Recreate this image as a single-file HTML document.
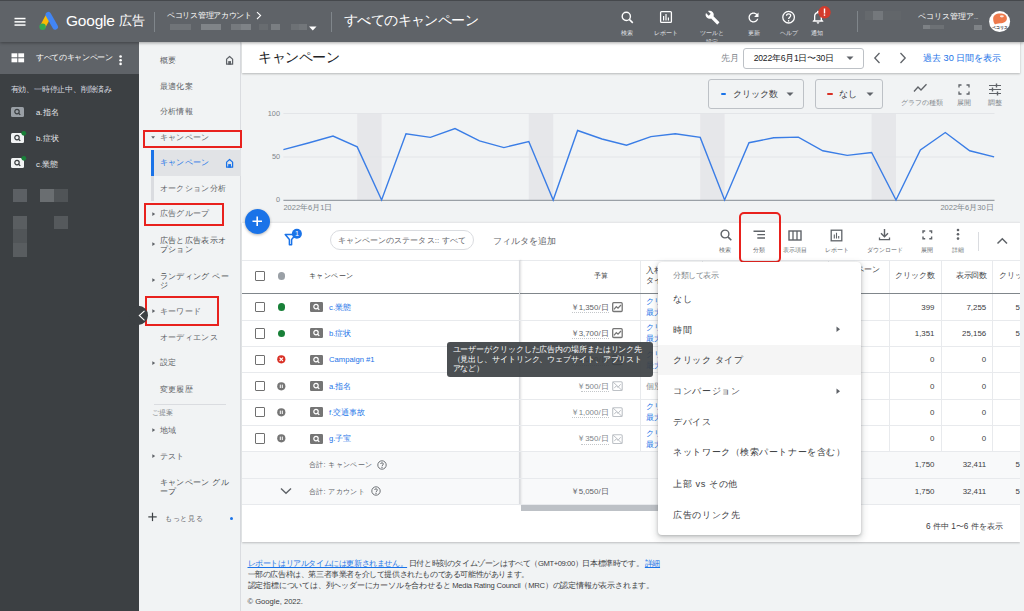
<!DOCTYPE html>
<html lang="ja">
<head>
<meta charset="utf-8">
<style>
*{margin:0;padding:0;box-sizing:border-box}
html,body{width:1024px;height:611px;overflow:hidden;background:#f1f3f4;font-family:"Liberation Sans",sans-serif;color:#3c4043}
.a{position:absolute;white-space:nowrap}
svg{position:absolute;overflow:visible}
/* header */
#hdr{position:absolute;left:0;top:0;width:1024px;height:42px;background:#5f6368;border-top:1px solid #45484c;box-shadow:0 1px 3px rgba(0,0,0,.35)}
/* sidebar */
#sb{position:absolute;left:0;top:42px;width:139px;height:569px;background:#3c4043}
#sbtop{position:absolute;left:0;top:42px;width:139px;height:32px;background:#5f6368}
#nav{position:absolute;left:139px;top:42px;width:102px;height:569px;background:#f1f3f4;border-right:1px solid #dadce0}
#title{position:absolute;left:242px;top:42px;width:778px;height:31px;background:#fff;box-shadow:0 1px 2px rgba(0,0,0,.25)}
#card{position:absolute;left:242px;top:222px;width:778px;height:320px;background:#fff;box-shadow:0 1px 2px rgba(60,64,67,.3)}
.w{color:#fff}
.nv{font-size:8.2px;color:#4a4e52;line-height:10px;letter-spacing:0.35px}
.red{position:absolute;border:2px solid #e8211d}
</style>
</head>
<body>
<div id="sb"></div>
<div id="sbtop"></div>
<div id="nav"></div>
<div id="title"></div>
<div id="card"></div>
<div id="hdr"></div>

<!-- HEADER CONTENT -->
<svg style="left:14px;top:17px" width="12" height="9"><rect x="0.5" y="0.8" width="11" height="1.5" fill="#fff"/><rect x="0.5" y="4.1" width="11" height="1.5" fill="#fff"/><rect x="0.5" y="7.3" width="11" height="1.5" fill="#fff"/></svg>
<svg style="left:36px;top:10px" width="24" height="22" viewBox="0 0 24 22">
<path d="M9.6 5.2 L14.6 8.2 L9.2 17.8 L4.2 15.4Z" fill="#fbbc04"/>
<line x1="12.4" y1="4.8" x2="19.2" y2="16.8" stroke="#4285f4" stroke-width="5.6" stroke-linecap="round"/>
<circle cx="6.6" cy="16.8" r="3.2" fill="#34a853"/>
</svg>
<div class="a w" style="left:66px;top:12px;font-size:15.5px;line-height:18px;letter-spacing:-0.2px">Google</div>
<div class="a w" style="left:119px;top:12px;font-size:13.4px;line-height:18px">広告</div>
<div class="a" style="left:154px;top:12px;width:1px;height:20px;background:#80868b"></div>
<div class="a w" style="left:167px;top:10px;font-size:7.6px;line-height:11px;letter-spacing:-0.3px">ペコリス管理アカウント</div>
<svg style="left:255px;top:11px" width="8" height="9"><path d="M2 1.2 L5.6 4.6 L2 8" fill="none" stroke="#fff" stroke-width="1.1"/></svg>
<div class="a" style="left:170px;top:23.5px;width:21px;height:6px;background:#75797d;opacity:.8;filter:blur(.6px)"></div>
<div class="a" style="left:200.5px;top:23.5px;width:20.5px;height:6px;background:#808488;filter:blur(.5px)"></div>
<div class="a" style="left:231px;top:23.5px;width:10px;height:6px;background:#767a7e;filter:blur(.5px)"></div>
<div class="a" style="left:241px;top:23.5px;width:9.5px;height:6px;background:#7f8387;filter:blur(.5px)"></div>
<div class="a" style="left:259px;top:23.5px;width:9px;height:6px;background:#686c70;filter:blur(.5px)"></div>
<div class="a" style="left:271px;top:23.5px;width:9px;height:6px;background:#7a7e82;filter:blur(.5px)"></div>
<div class="a" style="left:291px;top:23.5px;width:8px;height:6px;background:#6d7175;filter:blur(.5px)"></div>
<div class="a" style="left:299px;top:23.5px;width:8px;height:6px;background:#72767a;filter:blur(.5px)"></div>
<svg style="left:308px;top:26px" width="10" height="5"><path d="M1 0.5 L8.5 0.5 L4.75 4.5Z" fill="#fff"/></svg>
<div class="a" style="left:331px;top:12px;width:1px;height:20px;background:#80868b"></div>
<div class="a w" style="left:344px;top:12px;font-size:13.6px;line-height:18px;letter-spacing:-0.6px">すべてのキャンペーン</div>

<!-- header right icons -->
<svg style="left:619px;top:9px" width="16" height="16" viewBox="0 0 16 16"><circle cx="7.3" cy="7.4" r="4.1" fill="none" stroke="#fff" stroke-width="1.4"/><line x1="10.3" y1="10.4" x2="13.8" y2="13.9" stroke="#fff" stroke-width="1.5"/></svg>
<div class="a w" style="left:621px;top:28px;font-size:6.2px;line-height:9px;color:#e3e5e8">検索</div>
<svg style="left:659px;top:10px" width="14" height="14" viewBox="0 0 14 14"><rect x="1.6" y="1.6" width="10.8" height="10.8" rx="1" fill="none" stroke="#fff" stroke-width="1.3"/><rect x="4" y="6" width="1.2" height="4.5" fill="#fff"/><rect x="6.4" y="4" width="1.2" height="6.5" fill="#fff"/><rect x="8.8" y="7.5" width="1.2" height="3" fill="#fff"/></svg>
<div class="a w" style="left:653.5px;top:28px;font-size:6.1px;line-height:9px;color:#e3e5e8">レポート</div>
<svg style="left:705px;top:10px" width="15" height="15" viewBox="0 0 24 24"><path fill="#fff" d="M22.7 19l-9.1-9.1c.9-2.3.4-5-1.5-6.9-2-2-5-2.4-7.4-1.3L9 6 6 9 1.6 4.7C.4 7.1.9 10.1 2.9 12.1c1.9 1.9 4.6 2.4 6.9 1.5l9.1 9.1c.4.4 1 .4 1.4 0l2.3-2.3c.5-.4.5-1.1.1-1.4z"/></svg>
<div class="a w" style="left:700px;top:28px;font-size:6.15px;line-height:9px;color:#e3e5e8">ツールと</div>
<div class="a" style="left:700px;top:36px;width:30px;height:6px;overflow:hidden"><div class="a w" style="left:6px;top:1px;font-size:6.15px;line-height:9px;color:#e3e5e8">設定</div></div>
<svg style="left:746px;top:10px" width="15" height="15" viewBox="0 0 24 24"><path fill="#fff" d="M17.65 6.35C16.2 4.9 14.21 4 12 4c-4.42 0-7.99 3.58-7.99 8s3.57 8 7.99 8c3.73 0 6.84-2.55 7.73-6h-2.08c-.82 2.33-3.04 4-5.65 4-3.31 0-6-2.69-6-6s2.69-6 6-6c1.66 0 3.14.69 4.22 1.78L13 11h7V4l-2.35 2.35z"/></svg>
<div class="a w" style="left:747.5px;top:28px;font-size:6.1px;line-height:9px;color:#e3e5e8">更新</div>
<svg style="left:781px;top:10px" width="15" height="15" viewBox="0 0 15 15"><circle cx="7.6" cy="7.2" r="5.8" fill="none" stroke="#fff" stroke-width="1.3"/><path d="M5.5 5.7 C5.5 3.2 9.7 3.2 9.7 5.6 C9.7 7.1 7.6 7.2 7.6 9" fill="none" stroke="#fff" stroke-width="1.3"/><circle cx="7.6" cy="10.9" r="0.8" fill="#fff"/></svg>
<div class="a w" style="left:779.5px;top:28px;font-size:6.1px;line-height:9px;color:#e3e5e8">ヘルプ</div>
<svg style="left:810px;top:9px" width="16" height="16" viewBox="0 0 24 24"><path fill="#fff" d="M12 22c1.1 0 2-.9 2-2h-4c0 1.1.89 2 2 2zm6-6v-5c0-3.07-1.64-5.64-4.5-6.32V4c0-.83-.67-1.5-1.5-1.5s-1.5.67-1.5 1.5v.68C7.63 5.36 6 7.92 6 11v5l-2 2v1h16v-1l-2-2zm-2 1H8v-6c0-2.48 1.51-4.5 4-4.5s4 2.02 4 4.5v6z"/></svg>
<svg style="left:818px;top:6px" width="13" height="13" viewBox="0 0 13 13"><circle cx="6.5" cy="6.3" r="6.2" fill="#d33b2c"/><rect x="5.8" y="2.5" width="1.4" height="5" fill="#fff"/><rect x="5.8" y="8.4" width="1.4" height="1.4" fill="#fff"/></svg>
<div class="a w" style="left:811px;top:28px;font-size:6.2px;line-height:9px;color:#e3e5e8">通知</div>
<div class="a" style="left:857px;top:11px;width:1px;height:21px;background:#80868b"></div>
<div class="a" style="left:865px;top:11px;width:8px;height:9px;background:#65696d"></div>
<div class="a" style="left:873px;top:11px;width:10px;height:9px;background:#74787c"></div>
<div class="a" style="left:883px;top:11px;width:18px;height:9px;background:#62666a"></div>
<div class="a w" style="left:918px;top:11px;font-size:8.1px;line-height:11px">ペコリス管理ア<span style="font-size:5px">...</span></div>
<div class="a" style="left:923px;top:25px;width:7px;height:4px;background:#7d8185"></div>
<div class="a" style="left:930px;top:25px;width:14px;height:4px;background:#6d7175"></div>
<div class="a" style="left:974px;top:25px;width:8px;height:5px;background:#7f8387"></div>
<svg style="left:988px;top:10px" width="23" height="23" viewBox="0 0 23 23"><circle cx="11.6" cy="11.6" r="10.5" fill="#fff"/><path d="M5.2 9.5 C4.8 5.5 8 3.6 12 3.6 C16.5 3.6 18.9 5.6 18.9 8.4 C18.9 11.4 16 13 12 13.2 C9.5 13.3 8.2 13.8 7 14.4 C5.8 13 5.4 11.5 5.2 9.5Z" fill="#ee7a4c"/><ellipse cx="13.9" cy="6.3" rx="2" ry="1.1" fill="#fde6da"/><text x="3.6" y="19" font-size="4" letter-spacing="0.15" font-weight="bold" fill="#111" font-family="Liberation Sans">ペコリス</text></svg>

<!-- SIDEBAR -->
<svg style="left:11px;top:53px" width="14" height="10"><rect x="0.5" y="0.3" width="5.8" height="4" fill="#fff"/><rect x="7.3" y="0.3" width="5.8" height="4" fill="#fff"/><rect x="0.5" y="5.3" width="5.8" height="4" fill="#fff"/><rect x="7.3" y="5.3" width="5.8" height="4" fill="#fff"/></svg>
<div class="a w" style="left:36px;top:52px;font-size:7.6px;line-height:11px;letter-spacing:-0.35px">すべてのキャンペーン</div>
<svg style="left:118px;top:55px" width="5" height="12"><circle cx="2.6" cy="1.5" r="1.3" fill="#fff"/><circle cx="2.6" cy="5.2" r="1.3" fill="#fff"/><circle cx="2.6" cy="8.9" r="1.3" fill="#fff"/></svg>
<div class="a" style="left:10.5px;top:84px;font-size:7.8px;line-height:11px;letter-spacing:-0.2px;color:#dadce0">有効、一時停止中、削除済み</div>
<div class="a" style="left:11px;top:107px;width:13px;height:10px;background:#9aa0a6;border-radius:1.5px"></div>
<svg style="left:11px;top:107px" width="13" height="10"><circle cx="6" cy="4.6" r="2.2" fill="none" stroke="#3c4043" stroke-width="1.2"/><line x1="7.6" y1="6.2" x2="9.3" y2="7.9" stroke="#3c4043" stroke-width="1.3"/></svg>
<div class="a" style="left:36px;top:106.8px;font-size:7.8px;line-height:11px;color:#e8eaed">a.指名</div>
<div class="a" style="left:11px;top:133px;width:13px;height:10px;background:#f1f3f4;border-radius:1.5px"></div>
<svg style="left:11px;top:133px" width="13" height="10"><circle cx="6" cy="4.6" r="2.2" fill="none" stroke="#3c4043" stroke-width="1.2"/><line x1="7.6" y1="6.2" x2="9.3" y2="7.9" stroke="#3c4043" stroke-width="1.3"/><circle cx="12.8" cy="0.3" r="2.4" fill="#188038"/></svg>
<div class="a" style="left:36px;top:132.8px;font-size:7.8px;line-height:11px;color:#e8eaed">b.症状</div>
<div class="a" style="left:11px;top:158px;width:13px;height:10px;background:#f1f3f4;border-radius:1.5px"></div>
<svg style="left:11px;top:158px" width="13" height="10"><circle cx="6" cy="4.6" r="2.2" fill="none" stroke="#3c4043" stroke-width="1.2"/><line x1="7.6" y1="6.2" x2="9.3" y2="7.9" stroke="#3c4043" stroke-width="1.3"/><circle cx="12.8" cy="0.3" r="2.4" fill="#188038"/></svg>
<div class="a" style="left:36px;top:158.8px;font-size:7.8px;line-height:11px;color:#e8eaed">c.業態</div>
<div class="a" style="left:13px;top:189px;width:14px;height:13px;background:#5c6064"></div>
<div class="a" style="left:40px;top:189px;width:14px;height:13px;background:#6a6e71"></div>
<div class="a" style="left:54px;top:189px;width:13.5px;height:13px;background:#505457"></div>
<div class="a" style="left:13px;top:215.5px;width:14px;height:13.5px;background:#5a5e61"></div>
<div class="a" style="left:54px;top:215.5px;width:13.5px;height:13.5px;background:#55595c"></div>
<div class="a" style="left:13px;top:229px;width:14px;height:14px;background:#515558"></div>
<div class="a" style="left:13px;top:243px;width:14px;height:13.5px;background:#595d60"></div>

<!-- NAV -->
<div class="a nv" style="left:159.7px;top:56.1px;color:#5f6368">概要</div>
<svg style="left:225px;top:55px" width="10" height="11" viewBox="0 0 10 11"><path d="M1.6 9.2 V4.1 L4.6 1.5 L7.6 4.1 V9.2 Z" fill="none" stroke="#5f6368" stroke-width="1.25" stroke-linejoin="round"/><rect x="3.2" y="6.1" width="2.8" height="3.6" fill="#5f6368"/></svg>
<div class="a nv" style="left:159.7px;top:81.9px;color:#5f6368">最適化案</div>
<div class="a nv" style="left:159.7px;top:107.1px;color:#5f6368">分析情報</div>
<svg style="left:150.5px;top:135.5px" width="5" height="4"><path d="M0.2 0.3 L4 0.3 L2.1 2.8Z" fill="#5f6368"/></svg>
<div class="a nv" style="left:159.7px;top:132.6px;color:#5f6368">キャンペーン</div>
<div class="a" style="left:154px;top:150px;width:87px;height:25.5px;background:#e1e3e6"></div>
<div class="a" style="left:151px;top:150px;width:3px;height:25.5px;background:#1a73e8"></div>
<div class="a" style="left:151px;top:175.5px;width:3px;height:25px;background:#dadce0"></div>
<div class="a nv" style="left:159.7px;top:158.4px;color:#1a73e8">キャンペーン</div>
<svg style="left:225px;top:158px" width="10" height="11" viewBox="0 0 10 11"><path d="M1.6 9.2 V4.1 L4.6 1.5 L7.6 4.1 V9.2 Z" fill="none" stroke="#1a73e8" stroke-width="1.25" stroke-linejoin="round"/><rect x="3.2" y="6.1" width="2.8" height="3.6" fill="#1a73e8"/></svg>
<div class="a nv" style="left:159.7px;top:183.6px;color:#5f6368">オークション分析</div>
<svg style="left:151.5px;top:211.6px" width="4" height="5"><path d="M0.3 0.3 L3.2 2.1 L0.3 3.9Z" fill="#5f6368"/></svg>
<div class="a nv" style="left:159.7px;top:209.2px;color:#5f6368">広告グループ</div>
<svg style="left:151.5px;top:242.4px" width="4" height="5"><path d="M0.3 0.3 L3.2 2.1 L0.3 3.9Z" fill="#5f6368"/></svg>
<div class="a nv" style="left:159.7px;top:235.6px;line-height:9.5px;white-space:normal;width:80px">広告と広告表示オ<br>プション</div>
<svg style="left:151.5px;top:278.4px" width="4" height="5"><path d="M0.3 0.3 L3.2 2.1 L0.3 3.9Z" fill="#5f6368"/></svg>
<div class="a nv" style="left:159.7px;top:271.6px;line-height:9.2px;white-space:normal;width:80px">ランディング ペー<br>ジ</div>
<svg style="left:151.5px;top:309px" width="4" height="5"><path d="M0.3 0.3 L3.2 2.1 L0.3 3.9Z" fill="#5f6368"/></svg>
<div class="a nv" style="left:159.7px;top:306.6px;color:#5f6368">キーワード</div>
<div class="a nv" style="left:159.7px;top:332.8px;color:#5f6368">オーディエンス</div>
<svg style="left:151.5px;top:360.8px" width="4" height="5"><path d="M0.3 0.3 L3.2 2.1 L0.3 3.9Z" fill="#5f6368"/></svg>
<div class="a nv" style="left:159.7px;top:358.4px;color:#5f6368">設定</div>
<div class="a nv" style="left:159.7px;top:384.5px;color:#5f6368">変更履歴</div>
<div class="a" style="left:154px;top:404px;width:72px;height:1px;background:#dadce0"></div>
<div class="a" style="left:152px;top:408px;font-size:7.2px;line-height:9px;color:#80868b">ご提案</div>
<svg style="left:151.5px;top:428px" width="4" height="5"><path d="M0.3 0.3 L3.2 2.1 L0.3 3.9Z" fill="#5f6368"/></svg>
<div class="a nv" style="left:159.7px;top:425.6px;color:#5f6368">地域</div>
<svg style="left:151.5px;top:454px" width="4" height="5"><path d="M0.3 0.3 L3.2 2.1 L0.3 3.9Z" fill="#5f6368"/></svg>
<div class="a nv" style="left:159.7px;top:451.6px;color:#5f6368">テスト</div>
<div class="a nv" style="left:159.7px;top:477.6px;line-height:9.4px;white-space:normal;width:80px">キャンペーン グル<br>ープ</div>
<svg style="left:147.5px;top:512px" width="10" height="10"><rect x="0.3" y="4.3" width="8.4" height="1.2" fill="#3c4043"/><rect x="3.9" y="0.7" width="1.2" height="8.4" fill="#3c4043"/></svg>
<div class="a" style="left:164.7px;top:513.5px;font-size:7.4px;line-height:10px;letter-spacing:0.9px;color:#5f6368">もっと見る</div>
<div class="a" style="left:230.3px;top:517px;width:3px;height:3px;border-radius:50%;background:#1a73e8"></div>
<div class="red" style="left:143px;top:130px;width:98.5px;height:17.5px"></div>
<div class="red" style="left:143.5px;top:203px;width:80px;height:22.5px"></div>
<div class="red" style="left:145px;top:295.5px;width:73.5px;height:30.5px"></div>
<svg style="left:128px;top:305px" width="21" height="21"><circle cx="10.4" cy="10.3" r="9.6" fill="#3c4043"/><path d="M16.5 5.8 L11.3 10.5 L16.5 15.3" fill="none" stroke="#fff" stroke-width="1.1"/></svg>

<!-- TITLE/CHART -->
<div class="a" style="left:258px;top:48px;font-size:14px;line-height:18px;letter-spacing:-0.4px;color:#202124">キャンペーン</div>
<div class="a" style="left:720.5px;top:52.5px;font-size:9px;line-height:11px;color:#80868b">先月</div>
<div class="a" style="left:742.7px;top:48px;width:121.3px;height:20.5px;border:1px solid #bdc1c6;border-radius:3px;background:#fff"></div>
<div class="a" style="left:753.8px;top:52.5px;font-size:8.6px;line-height:11px;letter-spacing:-0.25px;color:#202124">2022年6月1日〜30日</div>
<svg style="left:846px;top:56px" width="9" height="5"><path d="M0.5 0.5 L7.5 0.5 L4 4Z" fill="#5f6368"/></svg>
<svg style="left:873px;top:52px" width="8" height="12"><path d="M6.5 1 L1.8 6 L6.5 11" fill="none" stroke="#5f6368" stroke-width="1.3"/></svg>
<svg style="left:898.5px;top:52px" width="8" height="12"><path d="M1.5 1 L6.2 6 L1.5 11" fill="none" stroke="#5f6368" stroke-width="1.3"/></svg>
<div class="a" style="left:923px;top:52px;font-size:9.2px;line-height:12px;color:#1a73e8">過去 30 日間を表示</div>
<div class="a" style="left:708px;top:78.6px;width:95.8px;height:30.4px;border:1px solid #bdc1c6;border-radius:3px"></div>
<div class="a" style="left:720.6px;top:93px;width:5.4px;height:2px;background:#1a73e8;border-radius:1px"></div>
<div class="a" style="left:732.6px;top:88px;font-size:9px;line-height:12px;color:#3c4043">クリック数</div>
<svg style="left:786px;top:92px" width="9" height="5"><path d="M0.5 0.5 L7.5 0.5 L4 4Z" fill="#5f6368"/></svg>
<div class="a" style="left:814.6px;top:78.6px;width:68px;height:30.4px;border:1px solid #bdc1c6;border-radius:3px"></div>
<div class="a" style="left:826.6px;top:93px;width:6px;height:2px;background:#d93025;border-radius:1px"></div>
<div class="a" style="left:839.2px;top:88px;font-size:9px;line-height:12px;color:#3c4043">なし</div>
<svg style="left:866px;top:92px" width="9" height="5"><path d="M0.5 0.5 L7.5 0.5 L4 4Z" fill="#5f6368"/></svg>
<svg style="left:913px;top:83px" width="15" height="10" viewBox="0 0 15 10"><path d="M1 8.5 L5 4 L8 7 L13.5 1.2" fill="none" stroke="#5f6368" stroke-width="1.3"/></svg>
<div class="a" style="left:900.8px;top:98px;font-size:6.6px;line-height:9px;color:#80868b">グラフの種類</div>
<svg style="left:957.5px;top:83.5px" width="12" height="11" viewBox="0 0 12 11"><path d="M1 3.5 V1 H3.5 M8.5 1 H11 V3.5 M11 7.5 V10 H8.5 M3.5 10 H1 V7.5" fill="none" stroke="#5f6368" stroke-width="1.3"/></svg>
<div class="a" style="left:956.8px;top:98px;font-size:6.6px;line-height:9px;color:#80868b">展開</div>
<svg style="left:987.5px;top:82.5px" width="14" height="13" viewBox="0 0 14 13"><path d="M1 2.5 H13 M1 6.5 H13 M1 10.5 H13" stroke="#5f6368" stroke-width="1.2"/><path d="M8.5 0.5 V4.5 M4.5 4.5 V8.5 M9.5 8.5 V12.5" stroke="#5f6368" stroke-width="1.4"/></svg>
<div class="a" style="left:987.6px;top:98px;font-size:6.6px;line-height:9px;color:#80868b">調整</div>
<svg style="left:0;top:0" width="1024" height="611"><rect x="357.2" y="113.5" width="24.4" height="86.5" fill="#e6e7ea"/><rect x="528.8" y="113.5" width="24.4" height="86.5" fill="#e6e7ea"/><rect x="700.2" y="113.5" width="24.4" height="86.5" fill="#e6e7ea"/><rect x="871.6" y="113.5" width="24.4" height="86.5" fill="#e6e7ea"/><line x1="283.4" y1="113.5" x2="994.5" y2="113.5" stroke="#e3e5e8" stroke-width="1"/><line x1="283.4" y1="157" x2="994.5" y2="157" stroke="#e3e5e8" stroke-width="1"/><line x1="283.4" y1="200.3" x2="994.5" y2="200.3" stroke="#9aa0a6" stroke-width="1.2"/><polyline points="283.4,149.6 308.3,143.0 333.0,136.1 357.2,146.9 381.6,200.0 406.0,133.7 430.4,137.4 455.0,128.6 479.5,140.8 503.9,147.6 528.8,141.5 553.2,200.0 577.6,130.5 602.0,139.0 626.5,145.2 650.9,136.6 675.3,133.7 700.2,137.4 724.6,200.0 749.0,142.7 773.7,137.8 798.3,137.1 822.8,150.8 847.2,155.4 871.6,152.5 896.0,200.0 920.4,150.0 945.3,132.5 969.7,150.8 994.1,156.9" fill="none" stroke="#3a7de6" stroke-width="1.4" stroke-linejoin="miter"/></svg>
<div class="a" style="left:263px;top:108.5px;width:17px;text-align:right;font-size:7.3px;line-height:10px;color:#80868b">100</div>
<div class="a" style="left:263px;top:152px;width:17px;text-align:right;font-size:7.3px;line-height:10px;color:#80868b">50</div>
<div class="a" style="left:263px;top:195px;width:17px;text-align:right;font-size:7.3px;line-height:10px;color:#80868b">0</div>
<div class="a" style="left:283.4px;top:203px;font-size:7.5px;line-height:10px;color:#80868b">2022年6月1日</div>
<div class="a" style="left:893.6px;top:203px;width:100px;text-align:right;font-size:7.5px;line-height:10px;color:#80868b">2022年6月30日</div>

<!-- TABLE -->
<svg style="left:283.5px;top:233px" width="14" height="13" viewBox="0 0 14 13"><path d="M1.2 1.6 H11.8 L7.6 6.6 V11.8 H5.4 V6.6 Z" fill="none" stroke="#1a73e8" stroke-width="1.5" stroke-linejoin="round"/></svg>
<svg style="left:291px;top:228px" width="12" height="12"><circle cx="5.9" cy="5.8" r="5" fill="#1a73e8"/><text x="5.9" y="8.4" font-size="7.2" text-anchor="middle" fill="#fff" font-family="Liberation Sans">1</text></svg>
<div class="a" style="left:329.7px;top:230px;width:144.7px;height:20.3px;border:1px solid #dadce0;border-radius:10px"></div>
<div class="a" style="left:337.5px;top:235px;font-size:8.07px;line-height:11px;letter-spacing:0.1px;color:#5f6368">キャンペーンのステータス:: すべて</div>
<div class="a" style="left:493px;top:235px;font-size:8.8px;line-height:12px;color:#5f6368">フィルタを追加</div>
<svg style="left:718.5px;top:228px" width="14" height="14" viewBox="0 0 14 14"><circle cx="6" cy="6" r="3.9" fill="none" stroke="#5f6368" stroke-width="1.4"/><line x1="8.9" y1="8.9" x2="12.3" y2="12.3" stroke="#5f6368" stroke-width="1.6"/></svg>
<div class="a" style="left:710.3px;top:244.5px;width:30px;text-align:center;font-size:6.35px;line-height:9px;color:#6b6f73">検索</div>
<svg style="left:752px;top:229px" width="14" height="12" viewBox="0 0 14 12"><path d="M1.5 2.2 H13 M5.3 5.6 H13 M5.3 9 H13" stroke="#5f6368" stroke-width="1.4"/></svg>
<div class="a" style="left:744.2px;top:244.5px;width:30px;text-align:center;font-size:6.35px;line-height:9px;color:#6b6f73">分類</div>
<svg style="left:788px;top:229.5px" width="14" height="11" viewBox="0 0 14 11"><rect x="1" y="1" width="12" height="9" fill="none" stroke="#5f6368" stroke-width="1.4"/><path d="M5 1 V10 M9 1 V10" stroke="#5f6368" stroke-width="1.3"/></svg>
<div class="a" style="left:780.0px;top:244.5px;width:30px;text-align:center;font-size:6.35px;line-height:9px;color:#6b6f73">表示項目</div>
<svg style="left:830px;top:228.5px" width="13" height="13" viewBox="0 0 13 13"><rect x="1.2" y="1.2" width="10.6" height="10.6" fill="none" stroke="#5f6368" stroke-width="1.3"/><path d="M4.3 5.5 V9.5 M6.5 3.8 V9.5 M8.7 7 V9.5" stroke="#5f6368" stroke-width="1.1"/></svg>
<div class="a" style="left:821.7px;top:244.5px;width:30px;text-align:center;font-size:6.35px;line-height:9px;color:#6b6f73">レポート</div>
<svg style="left:878px;top:228px" width="13" height="13" viewBox="0 0 13 13"><path d="M6.5 1 V8.5 M3 5.2 L6.5 8.7 L10 5.2" fill="none" stroke="#5f6368" stroke-width="1.4"/><path d="M1.5 9.5 V11.7 H11.5 V9.5" fill="none" stroke="#5f6368" stroke-width="1.3"/></svg>
<div class="a" style="left:864.5px;top:244.5px;width:40px;text-align:center;font-size:6.35px;line-height:9px;color:#6b6f73">ダウンロード</div>
<svg style="left:922px;top:230px" width="11" height="10" viewBox="0 0 11 10"><path d="M1 3.2 V1 H3.2 M7.3 1 H9.6 V3.2 M9.6 6.4 V8.7 H7.3 M3.2 8.7 H1 V6.4" fill="none" stroke="#5f6368" stroke-width="1.4"/></svg>
<div class="a" style="left:911.9px;top:244.5px;width:30px;text-align:center;font-size:6.35px;line-height:9px;color:#6b6f73">展開</div>
<svg style="left:955px;top:228px" width="6" height="14"><circle cx="3" cy="2" r="1.3" fill="#5f6368"/><circle cx="3" cy="6.3" r="1.3" fill="#5f6368"/><circle cx="3" cy="10.6" r="1.3" fill="#5f6368"/></svg>
<div class="a" style="left:943.0px;top:244.5px;width:30px;text-align:center;font-size:6.35px;line-height:9px;color:#6b6f73">詳細</div>
<div class="a" style="left:978px;top:232px;width:1px;height:19px;background:#dadce0"></div>
<svg style="left:996px;top:236.5px" width="13" height="8"><path d="M1.5 6.5 L6.3 1.8 L11 6.5" fill="none" stroke="#5f6368" stroke-width="1.5"/></svg>
<div class="a" style="left:242px;top:259.5px;width:778px;height:1px;background:#e8eaed"></div>
<div class="a" style="left:242px;top:222px;width:778px;height:1px;background:#e6e7e9"></div>
<div class="a" style="left:242px;top:292.8px;width:778px;height:1.6px;background:#80868b"></div>
<div class="a" style="left:640px;top:260px;width:1px;height:33px;background:#e8eaed"></div>
<div class="a" style="left:701.8px;top:260px;width:1px;height:33px;background:#e8eaed"></div>
<div class="a" style="left:827.9px;top:260px;width:1px;height:33px;background:#e8eaed"></div>
<div class="a" style="left:888.7px;top:260px;width:1px;height:33px;background:#e8eaed"></div>
<div class="a" style="left:940.5px;top:260px;width:1px;height:33px;background:#e8eaed"></div>
<div class="a" style="left:991.5px;top:260px;width:1px;height:33px;background:#e8eaed"></div>
<div class="a" style="left:640px;top:294px;width:1px;height:210.5px;background:#e8eaed"></div>
<div class="a" style="left:888.7px;top:294px;width:1px;height:210.5px;background:#e8eaed"></div>
<div class="a" style="left:940.5px;top:294px;width:1px;height:210.5px;background:#e8eaed"></div>
<div class="a" style="left:991.5px;top:294px;width:1px;height:210.5px;background:#e8eaed"></div>
<div class="a" style="left:242px;top:451.3px;width:778px;height:53px;background:#f8f9fa"></div>
<div class="a" style="left:519px;top:260px;width:1px;height:244.5px;background:#dadce0;box-shadow:1px 0 2px rgba(60,64,67,.25)"></div>
<div class="a" style="left:242px;top:319.8px;width:778px;height:1px;background:#e8eaed"></div>
<div class="a" style="left:242px;top:346.1px;width:778px;height:1px;background:#e8eaed"></div>
<div class="a" style="left:242px;top:372.4px;width:778px;height:1px;background:#e8eaed"></div>
<div class="a" style="left:242px;top:398.7px;width:778px;height:1px;background:#e8eaed"></div>
<div class="a" style="left:242px;top:424.9px;width:778px;height:1px;background:#e8eaed"></div>
<div class="a" style="left:242px;top:451.2px;width:778px;height:1px;background:#e8eaed"></div>
<div class="a" style="left:242px;top:477.5px;width:778px;height:1px;background:#e8eaed"></div>
<div class="a" style="left:242px;top:503.8px;width:778px;height:1px;background:#e8eaed"></div>
<div class="a" style="left:254.8px;top:271px;width:10.4px;height:10.4px;border:1.4px solid #707070;border-radius:1px"></div>
<div class="a" style="left:277.7px;top:272.3px;width:7.8px;height:7.8px;border-radius:50%;background:#9aa0a6"></div>
<div class="a" style="left:308.75px;top:271px;font-size:7.3px;line-height:10px;letter-spacing:0.5px;color:#3c4043">キャンペーン</div>
<div class="a" style="left:594.3px;top:271px;font-size:7.2px;line-height:10px;color:#3c4043">予算</div>
<div class="a" style="left:645.7px;top:266px;font-size:7.6px;line-height:10.4px;color:#3c4043">入札戦略<br>タイプ</div>
<div class="a" style="left:832px;top:265px;font-size:7.6px;line-height:10.4px;color:#3c4043">キャンペーン</div>
<div class="a" style="left:890px;top:271px;width:44.8px;text-align:right;font-size:7.8px;line-height:10px;color:#3c4043">クリック数</div>
<div class="a" style="left:942px;top:271px;width:44.4px;text-align:right;font-size:7.8px;line-height:10px;letter-spacing:-0.4px;color:#3c4043">表示回数</div>
<div class="a" style="left:999px;top:271px;font-size:7.8px;line-height:10px;color:#3c4043">クリック率</div>
<div class="a" style="left:254.8px;top:301.9px;width:10.4px;height:10.4px;border:1.4px solid #707070;border-radius:1px"></div>
<div class="a" style="left:277.7px;top:303.2px;width:7.8px;height:7.8px;border-radius:50%;background:#188038"></div>
<svg style="left:310px;top:302.1px" width="13" height="10"><rect x="0" y="0" width="13" height="10" rx="1.2" fill="#757575"/><circle cx="6" cy="4.6" r="2.2" fill="none" stroke="#fff" stroke-width="1.2"/><line x1="7.6" y1="6.2" x2="9.3" y2="7.9" stroke="#fff" stroke-width="1.3"/></svg>
<div class="a" style="left:329.1px;top:301.6px;font-size:7.65px;line-height:11px;color:#1a73e8">c.業態</div>
<div class="a" style="left:548px;top:301.6px;width:60.6px;text-align:right;font-size:7.9px;line-height:11px;color:#5f6368">￥1,350/日</div>
<div class="a" style="left:571.8px;top:312.1px;width:36.8px;border-top:1px dotted #c4c7ca"></div>
<svg style="left:611.5px;top:302.1px" width="11" height="10"><rect x="0.7" y="0.7" width="9.5" height="8.8" rx="1" fill="none" stroke="#757575" stroke-width="1.3"/><path d="M2 7.3 L4.3 4.6 L6 6.2 L9 3" fill="none" stroke="#757575" stroke-width="1.3"/></svg>
<div class="a" style="left:645.7px;top:296.1px;font-size:7.6px;line-height:11px;color:#1a73e8">クリ<br>最大</div>
<div class="a" style="left:880px;top:301.6px;width:54.5px;text-align:right;font-size:7.9px;line-height:11px;color:#3c4043">399</div>
<div class="a" style="left:930px;top:301.6px;width:56.2px;text-align:right;font-size:7.9px;line-height:11px;color:#3c4043">7,255</div>
<div class="a" style="left:1015.5px;top:301.6px;font-size:7.9px;line-height:11px;color:#3c4043">5</div>
<div class="a" style="left:254.8px;top:328.2px;width:10.4px;height:10.4px;border:1.4px solid #707070;border-radius:1px"></div>
<div class="a" style="left:277.7px;top:329.5px;width:7.8px;height:7.8px;border-radius:50%;background:#188038"></div>
<svg style="left:310px;top:328.4px" width="13" height="10"><rect x="0" y="0" width="13" height="10" rx="1.2" fill="#757575"/><circle cx="6" cy="4.6" r="2.2" fill="none" stroke="#fff" stroke-width="1.2"/><line x1="7.6" y1="6.2" x2="9.3" y2="7.9" stroke="#fff" stroke-width="1.3"/></svg>
<div class="a" style="left:329.1px;top:327.9px;font-size:7.65px;line-height:11px;color:#1a73e8">b.症状</div>
<div class="a" style="left:548px;top:327.9px;width:60.6px;text-align:right;font-size:7.9px;line-height:11px;color:#5f6368">￥3,700/日</div>
<div class="a" style="left:571.8px;top:338.4px;width:36.8px;border-top:1px dotted #c4c7ca"></div>
<svg style="left:611.5px;top:328.4px" width="11" height="10"><rect x="0.7" y="0.7" width="9.5" height="8.8" rx="1" fill="none" stroke="#757575" stroke-width="1.3"/><path d="M2 7.3 L4.3 4.6 L6 6.2 L9 3" fill="none" stroke="#757575" stroke-width="1.3"/></svg>
<div class="a" style="left:645.7px;top:322.4px;font-size:7.6px;line-height:11px;color:#1a73e8">クリ<br>最大</div>
<div class="a" style="left:880px;top:327.9px;width:54.5px;text-align:right;font-size:7.9px;line-height:11px;color:#3c4043">1,351</div>
<div class="a" style="left:930px;top:327.9px;width:56.2px;text-align:right;font-size:7.9px;line-height:11px;color:#3c4043">25,156</div>
<div class="a" style="left:1015.5px;top:327.9px;font-size:7.9px;line-height:11px;color:#3c4043">5</div>
<div class="a" style="left:254.8px;top:354.5px;width:10.4px;height:10.4px;border:1.4px solid #707070;border-radius:1px"></div>
<svg style="left:277.3px;top:355.4px" width="9" height="9"><circle cx="4.3" cy="4.3" r="4.1" fill="#d93025"/><path d="M2.6 2.6 L6 6 M6 2.6 L2.6 6" stroke="#fff" stroke-width="1.1"/></svg>
<svg style="left:310px;top:354.7px" width="13" height="10"><rect x="0" y="0" width="13" height="10" rx="1.2" fill="#757575"/><circle cx="6" cy="4.6" r="2.2" fill="none" stroke="#fff" stroke-width="1.2"/><line x1="7.6" y1="6.2" x2="9.3" y2="7.9" stroke="#fff" stroke-width="1.3"/></svg>
<div class="a" style="left:329.1px;top:354.2px;font-size:7.65px;line-height:11px;color:#1a73e8">Campaign #1</div>
<div class="a" style="left:548px;top:354.2px;width:60.6px;text-align:right;font-size:7.9px;line-height:11px;color:#5f6368">￥1,000/日</div>
<div class="a" style="left:571.8px;top:364.7px;width:36.8px;border-top:1px dotted #c4c7ca"></div>
<svg style="left:611.5px;top:354.7px" width="11" height="10"><rect x="0.7" y="0.7" width="9.5" height="8.8" rx="1" fill="none" stroke="#757575" stroke-width="1.3"/><path d="M2 7.3 L4.3 4.6 L6 6.2 L9 3" fill="none" stroke="#757575" stroke-width="1.3"/></svg>
<div class="a" style="left:645.7px;top:348.7px;font-size:7.6px;line-height:11px;color:#1a73e8">クリ<br>最大</div>
<div class="a" style="left:880px;top:354.2px;width:54.5px;text-align:right;font-size:7.9px;line-height:11px;color:#3c4043">0</div>
<div class="a" style="left:930px;top:354.2px;width:56.2px;text-align:right;font-size:7.9px;line-height:11px;color:#3c4043">0</div>
<div class="a" style="left:254.8px;top:380.8px;width:10.4px;height:10.4px;border:1.4px solid #707070;border-radius:1px"></div>
<svg style="left:277.3px;top:381.7px" width="9" height="9"><circle cx="4.3" cy="4.3" r="4.1" fill="#757575"/><path d="M3.3 2.6 V6 M5.3 2.6 V6" stroke="#fff" stroke-width="1"/></svg>
<svg style="left:310px;top:381.0px" width="13" height="10"><rect x="0" y="0" width="13" height="10" rx="1.2" fill="#757575"/><circle cx="6" cy="4.6" r="2.2" fill="none" stroke="#fff" stroke-width="1.2"/><line x1="7.6" y1="6.2" x2="9.3" y2="7.9" stroke="#fff" stroke-width="1.3"/></svg>
<div class="a" style="left:329.1px;top:380.5px;font-size:7.65px;line-height:11px;color:#1a73e8">a.指名</div>
<div class="a" style="left:548px;top:380.5px;width:60.6px;text-align:right;font-size:7.9px;line-height:11px;color:#80868b">￥500/日</div>
<div class="a" style="left:581.0px;top:391.0px;width:27.6px;border-top:1px dotted #c4c7ca"></div>
<svg style="left:611.5px;top:381.0px" width="11" height="10"><rect x="0.7" y="0.7" width="9.5" height="8.8" rx="1" fill="none" stroke="#bdc1c6" stroke-width="1.1"/><path d="M2.2 7.2 L4.3 4.8 L6 6.3 L8.7 3.2 M0.8 0.8 L10 9.4" fill="none" stroke="#bdc1c6" stroke-width="1"/></svg>
<div class="a" style="left:645.7px;top:380.5px;font-size:7.6px;line-height:11px;color:#80868b">個別</div>
<div class="a" style="left:880px;top:380.5px;width:54.5px;text-align:right;font-size:7.9px;line-height:11px;color:#3c4043">0</div>
<div class="a" style="left:930px;top:380.5px;width:56.2px;text-align:right;font-size:7.9px;line-height:11px;color:#3c4043">0</div>
<div class="a" style="left:254.8px;top:407.1px;width:10.4px;height:10.4px;border:1.4px solid #707070;border-radius:1px"></div>
<svg style="left:277.3px;top:408.0px" width="9" height="9"><circle cx="4.3" cy="4.3" r="4.1" fill="#757575"/><path d="M3.3 2.6 V6 M5.3 2.6 V6" stroke="#fff" stroke-width="1"/></svg>
<svg style="left:310px;top:407.3px" width="13" height="10"><rect x="0" y="0" width="13" height="10" rx="1.2" fill="#757575"/><circle cx="6" cy="4.6" r="2.2" fill="none" stroke="#fff" stroke-width="1.2"/><line x1="7.6" y1="6.2" x2="9.3" y2="7.9" stroke="#fff" stroke-width="1.3"/></svg>
<div class="a" style="left:329.1px;top:406.8px;font-size:7.65px;line-height:11px;color:#1a73e8">f.交通事故</div>
<div class="a" style="left:548px;top:406.8px;width:60.6px;text-align:right;font-size:7.9px;line-height:11px;color:#80868b">￥1,000/日</div>
<div class="a" style="left:571.8px;top:417.3px;width:36.8px;border-top:1px dotted #c4c7ca"></div>
<svg style="left:611.5px;top:407.3px" width="11" height="10"><rect x="0.7" y="0.7" width="9.5" height="8.8" rx="1" fill="none" stroke="#bdc1c6" stroke-width="1.1"/><path d="M2.2 7.2 L4.3 4.8 L6 6.3 L8.7 3.2 M0.8 0.8 L10 9.4" fill="none" stroke="#bdc1c6" stroke-width="1"/></svg>
<div class="a" style="left:645.7px;top:401.3px;font-size:7.6px;line-height:11px;color:#1a73e8">クリ<br>最大</div>
<div class="a" style="left:880px;top:406.8px;width:54.5px;text-align:right;font-size:7.9px;line-height:11px;color:#3c4043">0</div>
<div class="a" style="left:930px;top:406.8px;width:56.2px;text-align:right;font-size:7.9px;line-height:11px;color:#3c4043">0</div>
<div class="a" style="left:254.8px;top:433.4px;width:10.4px;height:10.4px;border:1.4px solid #707070;border-radius:1px"></div>
<svg style="left:277.3px;top:434.2px" width="9" height="9"><circle cx="4.3" cy="4.3" r="4.1" fill="#757575"/><path d="M3.3 2.6 V6 M5.3 2.6 V6" stroke="#fff" stroke-width="1"/></svg>
<svg style="left:310px;top:433.6px" width="13" height="10"><rect x="0" y="0" width="13" height="10" rx="1.2" fill="#757575"/><circle cx="6" cy="4.6" r="2.2" fill="none" stroke="#fff" stroke-width="1.2"/><line x1="7.6" y1="6.2" x2="9.3" y2="7.9" stroke="#fff" stroke-width="1.3"/></svg>
<div class="a" style="left:329.1px;top:433.1px;font-size:7.65px;line-height:11px;color:#1a73e8">g.子宝</div>
<div class="a" style="left:548px;top:433.1px;width:60.6px;text-align:right;font-size:7.9px;line-height:11px;color:#80868b">￥350/日</div>
<div class="a" style="left:581.0px;top:443.6px;width:27.6px;border-top:1px dotted #c4c7ca"></div>
<svg style="left:611.5px;top:433.6px" width="11" height="10"><rect x="0.7" y="0.7" width="9.5" height="8.8" rx="1" fill="none" stroke="#bdc1c6" stroke-width="1.1"/><path d="M2.2 7.2 L4.3 4.8 L6 6.3 L8.7 3.2 M0.8 0.8 L10 9.4" fill="none" stroke="#bdc1c6" stroke-width="1"/></svg>
<div class="a" style="left:645.7px;top:427.6px;font-size:7.6px;line-height:11px;color:#1a73e8">クリ<br>最大</div>
<div class="a" style="left:880px;top:433.1px;width:54.5px;text-align:right;font-size:7.9px;line-height:11px;color:#3c4043">0</div>
<div class="a" style="left:930px;top:433.1px;width:56.2px;text-align:right;font-size:7.9px;line-height:11px;color:#3c4043">0</div>
<div class="a" style="left:308.8px;top:459.3px;font-size:7.3px;line-height:11px;letter-spacing:0.35px;color:#5f6368">合計: キャンペーン</div>
<svg style="left:377.2px;top:459.8px" width="10" height="10"><circle cx="5" cy="5" r="4.2" fill="none" stroke="#5f6368" stroke-width="0.9"/><path d="M3.6 4 C3.6 2.4 6.4 2.4 6.4 4 C6.4 5 5 5 5 6.2" fill="none" stroke="#5f6368" stroke-width="0.9"/><circle cx="5" cy="7.4" r="0.55" fill="#5f6368"/></svg>
<div class="a" style="left:880px;top:459.3px;width:54.5px;text-align:right;font-size:7.9px;line-height:11px;color:#3c4043">1,750</div>
<div class="a" style="left:930px;top:459.3px;width:56.2px;text-align:right;font-size:7.9px;line-height:11px;color:#3c4043">32,411</div>
<div class="a" style="left:1015.5px;top:459.3px;font-size:7.9px;line-height:11px;color:#3c4043">5</div>
<div class="a" style="left:308.8px;top:485.6px;font-size:7.3px;line-height:11px;letter-spacing:0.35px;color:#5f6368">合計: アカウント</div>
<svg style="left:371.1px;top:486.1px" width="10" height="10"><circle cx="5" cy="5" r="4.2" fill="none" stroke="#5f6368" stroke-width="0.9"/><path d="M3.6 4 C3.6 2.4 6.4 2.4 6.4 4 C6.4 5 5 5 5 6.2" fill="none" stroke="#5f6368" stroke-width="0.9"/><circle cx="5" cy="7.4" r="0.55" fill="#5f6368"/></svg>
<div class="a" style="left:880px;top:485.6px;width:54.5px;text-align:right;font-size:7.9px;line-height:11px;color:#3c4043">1,750</div>
<div class="a" style="left:930px;top:485.6px;width:56.2px;text-align:right;font-size:7.9px;line-height:11px;color:#3c4043">32,411</div>
<div class="a" style="left:1015.5px;top:485.6px;font-size:7.9px;line-height:11px;color:#3c4043">5</div>
<svg style="left:279.5px;top:487.1px" width="12" height="8"><path d="M1 1.5 L6 6.2 L11 1.5" fill="none" stroke="#5f6368" stroke-width="1.4"/></svg>
<div class="a" style="left:548px;top:485.6px;width:60.6px;text-align:right;font-size:7.9px;line-height:11px;color:#5f6368">￥5,050/日</div>
<div class="a" style="left:521px;top:505px;width:300px;height:5.5px;background:#bdc1c6"></div>
<div class="a" style="left:926px;top:521px;font-size:8.27px;line-height:11px;color:#3c4043">6 件中 1〜6 件を表示</div>
<div class="a" style="left:244.7px;top:208.8px;width:25px;height:25px;border-radius:50%;background:#1a73e8;box-shadow:0 1px 3px rgba(0,0,0,.3)"></div>
<svg style="left:250px;top:214px" width="15" height="15"><path d="M7.2 2.5 V12 M2.5 7.2 H12" stroke="#fff" stroke-width="1.6"/></svg>
<div class="a" style="left:739px;top:212px;width:41.7px;height:51px;border:2px solid #e8211d;border-radius:5px"></div>

<!-- MENU / TOOLTIP / FOOTER -->
<div class="a" style="left:1020px;top:215px;width:4px;height:330px;background:#f1f3f4"></div>
<div class="a" style="left:657.7px;top:262px;width:203.6px;height:272.7px;background:#fff;border-radius:4px;box-shadow:0 1px 3px rgba(60,64,67,.3),0 3px 6px 2px rgba(60,64,67,.15)"></div>
<div class="a" style="left:657.7px;top:345.1px;width:203.6px;height:29.7px;background:#f5f5f5"></div>
<div class="a" style="left:673.4px;top:269.5px;font-size:7.5px;line-height:11px;letter-spacing:-0.5px;color:#80868b">分類して表示</div>
<div class="a" style="left:673.4px;top:292.8px;font-size:9.3px;line-height:13px;letter-spacing:0.55px;color:#3c4043">なし</div>
<div class="a" style="left:673.4px;top:323.5px;font-size:9.3px;line-height:13px;letter-spacing:0.55px;color:#3c4043">時間</div>
<svg style="left:836px;top:326.4px" width="5" height="7"><path d="M0.5 0.5 L4 3.2 L0.5 6Z" fill="#5f6368"/></svg>
<div class="a" style="left:673.4px;top:353.7px;font-size:9.3px;line-height:13px;letter-spacing:0.55px;color:#3c4043">クリック タイプ</div>
<div class="a" style="left:673.4px;top:384.9px;font-size:9.3px;line-height:13px;letter-spacing:0.55px;color:#3c4043">コンバージョン</div>
<svg style="left:836px;top:387.8px" width="5" height="7"><path d="M0.5 0.5 L4 3.2 L0.5 6Z" fill="#5f6368"/></svg>
<div class="a" style="left:673.4px;top:415.8px;font-size:9.3px;line-height:13px;letter-spacing:0.55px;color:#3c4043">デバイス</div>
<div class="a" style="left:673.4px;top:446.3px;font-size:9.3px;line-height:13px;letter-spacing:0.55px;color:#3c4043">ネットワーク（検索パートナーを含む）</div>
<div class="a" style="left:673.4px;top:477.5px;font-size:9.3px;line-height:13px;letter-spacing:0.55px;color:#3c4043">上部 vs その他</div>
<div class="a" style="left:673.4px;top:508.5px;font-size:9.3px;line-height:13px;letter-spacing:0.55px;color:#3c4043">広告のリンク先</div>
<div class="a" style="left:447.1px;top:342.1px;width:205.6px;height:35.4px;background:rgba(60,64,67,.92);border-radius:3px"></div>
<div class="a" style="left:452.5px;top:345px;font-size:7.9px;line-height:9.7px;letter-spacing:-0.1px;color:#fff">ユーザーがクリックした広告内の場所またはリンク先<br>（見出し、サイトリンク、ウェブサイト、アプリスト<br>アなど）</div>
<div class="a" style="left:247.5px;top:557.5px;font-size:7.6px;line-height:11px;letter-spacing:-0.4px;color:#3c4043"><span style="color:#1a73e8;text-decoration:underline">レポートはリアルタイムには更新されません。</span> 日付と時刻のタイムゾーンはすべて（GMT+09:00）日本標準時です。 <span style="color:#1a73e8;text-decoration:underline">詳細</span></div>
<div class="a" style="left:247.5px;top:569.2px;font-size:7.6px;line-height:11px;letter-spacing:-0.4px;color:#3c4043">一部の広告枠は、第三者事業者を介して提供されたものである可能性があります。</div>
<div class="a" style="left:247.5px;top:580.2px;font-size:7.6px;line-height:11px;letter-spacing:-0.2px;color:#3c4043">認定指標については、列ヘッダーにカーソルを合わせると Media Rating Council（MRC）の認定情報が表示されます。</div>
<div class="a" style="left:247.5px;top:596px;font-size:7.6px;line-height:11px;color:#3c4043">© Google, 2022.</div>

</body>
</html>
